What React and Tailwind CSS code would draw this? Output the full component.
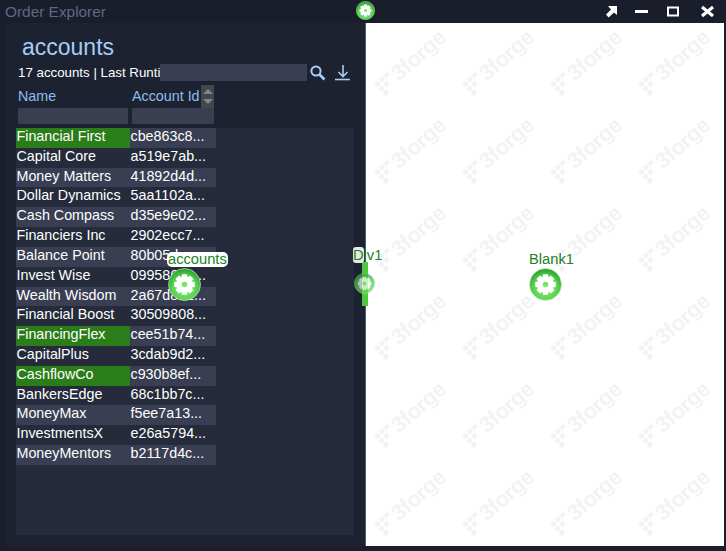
const rows = [
  ["Financial First", "cbe863c8...", true],
  ["Capital Core", "a519e7ab..."],
  ["Money Matters", "41892d4d..."],
  ["Dollar Dynamics", "5aa1102a..."],
  ["Cash Compass", "d35e9e02..."],
  ["Financiers Inc", "2902ecc7..."],
  ["Balance Point", "80b05dcc..."],
  ["Invest Wise", "09958612..."],
  ["Wealth Wisdom", "2a67d8e1..."],
  ["Financial Boost", "30509808..."],
  ["FinancingFlex", "cee51b74...", true],
  ["CapitalPlus", "3cdab9d2..."],
  ["CashflowCo", "c930b8ef...", true],
  ["BankersEdge", "68c1bb7c..."],
  ["MoneyMax", "f5ee7a13..."],
  ["InvestmentsX", "e26a5794..."],
  ["MoneyMentors", "b2117d4c..."],
];

const font = { fontFamily: '"Liberation Sans", Arial, sans-serif' };

function Gear({ size, id, className = "" }) {
  const teeth = [0, 45, 90, 135, 180, 225, 270, 315];
  return (
    <svg width={size} height={size} viewBox="0 0 32 32" className={className}>
      <defs>
        <radialGradient id={id} cx="50%" cy="62%" r="60%">
          <stop offset="0%" stopColor="#8cec76" />
          <stop offset="65%" stopColor="#58d24f" />
          <stop offset="100%" stopColor="#25a02c" />
        </radialGradient>
      </defs>
      <circle cx="16" cy="16" r="15.5" fill={`url(#${id})`} stroke="#dff2da" strokeWidth="0.6" />
      {teeth.map((a) => (
        <rect key={a} x="13.4" y="6" width="5.2" height="5" rx="0.8" fill="#fff" transform={`rotate(${a} 16 16)`} />
      ))}
      <circle cx="16" cy="16" r="5.4" fill="none" stroke="#fff" strokeWidth="5.4" />
    </svg>
  );
}

function Mark() {
  return (
    <div className="flex items-center gap-[2px] -rotate-[41deg] w-[88px] justify-center">
      <svg width="18" height="18" viewBox="0 0 18 18" className="-rotate-[4deg] shrink-0">
        <g fill="#f3f3f4">
          <rect x="0" y="1" width="5" height="4.4" />
          <rect x="6.5" y="1" width="5" height="4.4" />
          <rect x="13" y="1" width="5" height="4.4" />
          <rect x="0" y="7" width="5" height="4.4" />
          <rect x="6.5" y="7" width="5" height="4.4" />
          <rect x="0" y="13" width="5" height="4.4" />
        </g>
      </svg>
      <span className="text-[22px] font-bold leading-none tracking-[-0.5px] text-[#f3f3f4]">3forge</span>
    </div>
  );
}

export default function App() {
  return (
    <div style={font} className="relative w-[726px] h-[551px] overflow-hidden bg-[#1a1e2b] flex flex-col">
      <div className="h-[23px] shrink-0 flex items-center pl-[5px] pr-[12px]">
        <span className="text-[15.4px] text-[#5f6788] leading-none">Order Explorer</span>
        <div className="ml-auto flex items-center text-white">
          <svg width="13" height="13" viewBox="0 0 13 13"><path d="M3 1h9v9l-3-2.6L3.6 12.4 1 9.6 6 4.4z" fill="#fff" /></svg>
          <svg width="13" height="13" viewBox="0 0 13 13" className="ml-[17px]"><rect x="0" y="5" width="13" height="3" fill="#fff" /></svg>
          <svg width="12" height="13" viewBox="0 0 12 13" className="ml-[19px]"><rect x="1" y="2.5" width="10" height="8" fill="none" stroke="#fff" strokeWidth="2" /></svg>
          <svg width="13" height="13" viewBox="0 0 13 13" className="ml-[22px]"><path d="M1 2l11 9M12 2L1 11" stroke="#fff" strokeWidth="3.2" /></svg>
        </div>
      </div>

      <div className="flex h-[523px] shrink-0 pl-[5px] pr-[2px]">
        <div className="w-[360px] shrink-0 bg-[#1d2230] flex flex-col pl-[11px] pr-[11px]">
          <div className="h-[105px] shrink-0 flex flex-col">
            <div className="pl-[6px] pt-[12px] text-[23px] leading-[25px] text-[#a6cdf6]">accounts</div>
            <div className="flex items-center h-[17px] mt-[4px] pl-[2px]">
              <span className="w-[142px] text-[13.3px] text-white whitespace-nowrap overflow-hidden">17 accounts | Last Runti</span>
              <div className="w-[147px] h-[17px] bg-[#393e52]" />
              <svg width="17" height="17" viewBox="0 0 17 17" className="ml-[2px]"><circle cx="7" cy="7" r="4.6" fill="none" stroke="#a6cdf6" strokeWidth="2" /><path d="M10.5 10.5l5 5" stroke="#a6cdf6" strokeWidth="2.6" /></svg>
              <svg width="16" height="17" viewBox="0 0 16 17" className="ml-[9px]"><path d="M8 1v11M3.5 8L8 12.5 12.5 8" fill="none" stroke="#a6cdf6" strokeWidth="1.6" /><path d="M0 15.5h15" stroke="#a6cdf6" strokeWidth="1.6" /></svg>
            </div>
            <div className="flex h-[23px] mt-[4px] items-start pl-[2px]">
              <span className="w-[114px] text-[14.3px] leading-[23px] text-[#8fbdf0]">Name</span>
              <span className="w-[69px] text-[14.3px] leading-[23px] text-[#8fbdf0] whitespace-nowrap">Account Id</span>
              <div className="w-[13px] h-[23px] bg-[#44464e] flex flex-col items-center justify-between py-[4px]">
                <div className="w-0 h-0 border-x-[5px] border-x-transparent border-b-[5px] border-b-[#85858a]" />
                <div className="w-0 h-0 border-x-[5px] border-x-transparent border-t-[5px] border-t-[#85858a]" />
              </div>
            </div>
            <div className="flex h-[16px] pl-[2px] gap-[4px]">
              <div className="w-[110px] bg-[#393e52]" />
              <div className="w-[82px] bg-[#393e52]" />
            </div>
          </div>
          <div className="h-[407px] shrink-0 bg-[#252b3a] flex flex-col">
            {rows.map(([name, id, green], i) => (
              <div key={name} className={`h-[19.82px] shrink-0 w-[200px] flex text-[14.3px] text-white leading-[16px] ${i % 2 === 0 ? "bg-[#393e52]" : ""}`}>
                <div className={`w-[114px] pl-[0.5px] whitespace-nowrap ${green ? "bg-[#2b7d1a]" : ""}`}>{name}</div>
                <div className="pl-[0.5px] whitespace-nowrap">{id}</div>
              </div>
            ))}
          </div>
        </div>
        <div className="flex-1 bg-white border-l border-[#4a5c72] overflow-hidden">
          <div className="grid grid-cols-[repeat(4,88px)] auto-rows-[88px] -mt-[5px] ml-[1px]">
            {Array.from({ length: 24 }).map((_, i) => (
              <div key={i} className="flex items-center justify-center"><Mark /></div>
            ))}
          </div>
        </div>
      </div>

      <Gear id="g0" size={19} className="absolute left-[356px] top-[1px]" />

      <div className="absolute left-[167px] top-[252px] h-[15px] px-[1px] bg-white rounded-[5px] text-[14.7px] leading-[15px] text-[#257f25]">accounts</div>
      <Gear id="g1" size={33} className="absolute left-[168px] top-[268px]" />

      <div className="absolute left-[362px] top-[262px] w-[6px] h-[44px] bg-[#4fc83f]" />
      <div className="absolute left-[353px] top-[248px] h-[14px] text-[14.7px] leading-[14px] text-[#257f25]">
        <span className="bg-[#e8e8e8] rounded-[3px]">D</span>iv1
      </div>
      <Gear id="g2" size={21} className="absolute left-[354px] top-[273px] opacity-70" />

      <div className="absolute left-[529px] top-[251px] text-[14.7px] leading-[16px] text-[#257f25]">Blank1</div>
      <Gear id="g3" size={33} className="absolute left-[529px] top-[268px]" />
    </div>
  );
}
